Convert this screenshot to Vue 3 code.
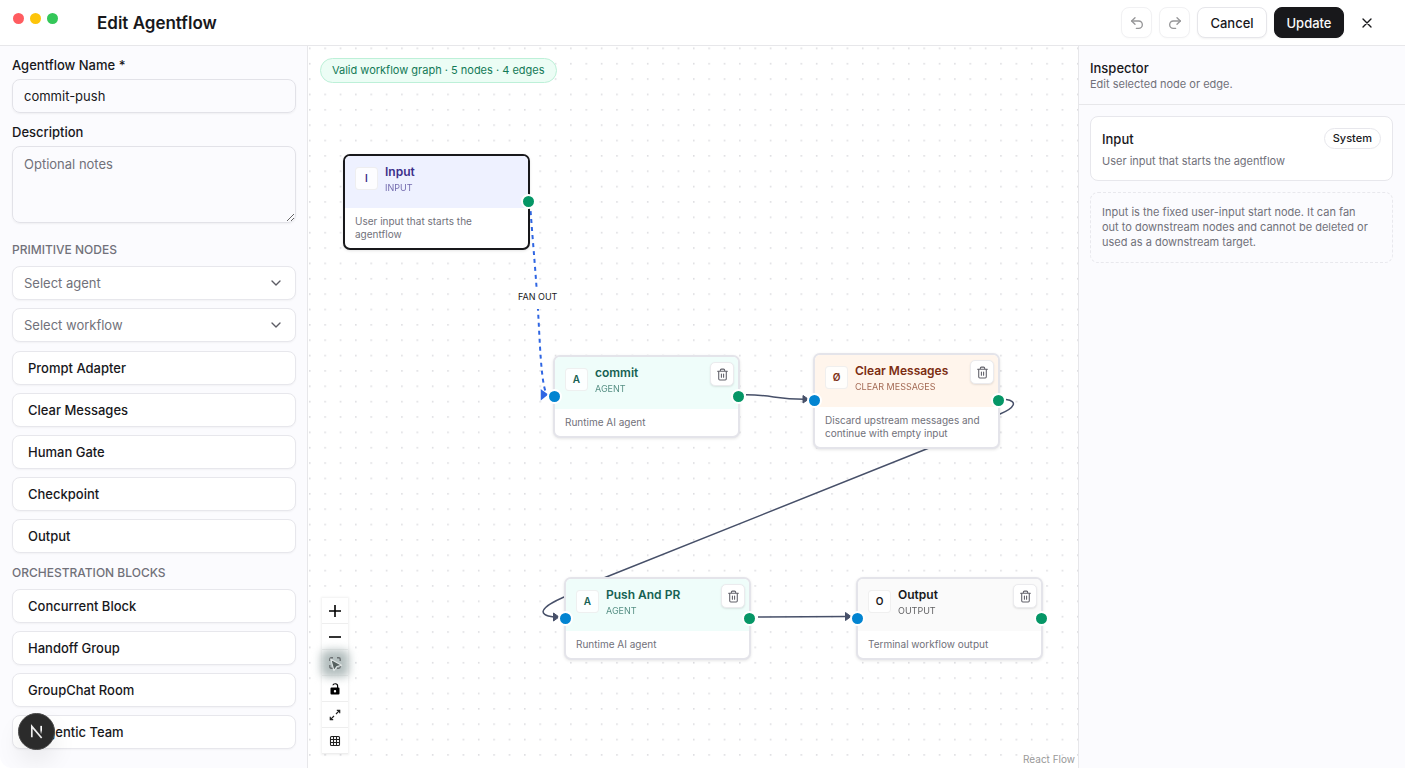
<script setup>
import { ref } from 'vue'

const name = ref('commit-push')
const notes = ref('')
const agent = ref('')
const workflow = ref('')

const primitives = ['Prompt Adapter', 'Clear Messages', 'Human Gate', 'Checkpoint', 'Output']
const blocks = ['Concurrent Block', 'Handoff Group', 'GroupChat Room', 'Magentic Team']

const nodes = [
  { id: 'input', x: 35, y: 108, tone: 'indigo', glyph: 'I', title: 'Input', kind: 'Input', text: 'User input that starts the agentflow', selected: true, out: true },
  { id: 'commit', x: 245, y: 309, tone: 'teal', glyph: 'A', title: 'commit', kind: 'Agent', text: 'Runtime AI agent', removable: true, in: true, out: true },
  { id: 'clear', x: 505, y: 307, tone: 'orange', glyph: 'Ø', title: 'Clear Messages', kind: 'Clear Messages', text: 'Discard upstream messages and continue with empty input', removable: true, in: true, out: true },
  { id: 'push', x: 256, y: 531, tone: 'teal', glyph: 'A', title: 'Push And PR', kind: 'Agent', text: 'Runtime AI agent', removable: true, in: true, out: true },
  { id: 'output', x: 548, y: 531, tone: 'plain', glyph: 'O', title: 'Output', kind: 'Output', text: 'Terminal workflow output', removable: true, in: true, out: true },
]
</script>

<template>
  <div class="app">
    <header class="topbar">
      <div class="lights"><i class="red"></i><i class="yellow"></i><i class="green"></i></div>
      <h1>Edit Agentflow</h1>
      <div class="actions">
        <button class="btn square faded" aria-label="Undo" disabled>
          <svg viewBox="0 0 24 24" class="line"><path d="M9 14 4 9l5-5" /><path d="M4 9h10.500a5.500 5.500 0 0 1 0 11H11" /></svg>
        </button>
        <button class="btn square faded" aria-label="Redo" disabled>
          <svg viewBox="0 0 24 24" class="line"><path d="m15 14 5-5-5-5" /><path d="M20 9H9.500a5.500 5.500 0 0 0 0 11H13" /></svg>
        </button>
        <button class="btn">Cancel</button>
        <button class="btn primary">Update</button>
        <button class="btn square bare" aria-label="Close">
          <svg viewBox="0 0 24 24" class="line"><path d="M18 6 6 18M6 6l12 12" /></svg>
        </button>
      </div>
    </header>

    <main class="work">
      <aside class="palette">
        <label for="flow-name">Agentflow Name *</label>
        <input id="flow-name" v-model="name" class="field" type="text" />
        <label for="flow-notes" class="spaced">Description</label>
        <textarea id="flow-notes" v-model="notes" class="field area" placeholder="Optional notes"></textarea>

        <h2 class="first">Primitive Nodes</h2>
        <div class="list">
          <div class="select">
            <select v-model="agent" aria-label="Agent"><option value="">Select agent</option></select>
            <svg viewBox="0 0 24 24" class="line"><path d="m6 9 6 6 6-6" /></svg>
          </div>
          <div class="select">
            <select v-model="workflow" aria-label="Workflow"><option value="">Select workflow</option></select>
            <svg viewBox="0 0 24 24" class="line"><path d="m6 9 6 6 6-6" /></svg>
          </div>
        </div>
        <div class="list after">
          <button v-for="p in primitives" :key="p" class="item">{{ p }}</button>
        </div>

        <h2>Orchestration Blocks</h2>
        <div class="list">
          <button v-for="b in blocks" :key="b" class="item">{{ b }}</button>
        </div>
      </aside>

      <section class="canvas">
        <svg class="layer">
          <defs>
            <pattern id="dots" width="20" height="20" patternUnits="userSpaceOnUse" patternTransform="translate(1 1.500) scale(.768)">
              <rect x="0" y="0.500" width="2" height="1.300" fill="#c6c6cc" />
            </pattern>
          </defs>
          <rect width="100%" height="100%" fill="url(#dots)" />
        </svg>
        <svg class="layer edges" viewBox="0 0 770 722">
          <g transform="translate(-308 -46)" fill="none" stroke="#475069" stroke-width="1.500">
            <path d="M530 203C533 245 536 275 538 310S541 380 546 393" stroke="#2f66e3" stroke-width="2" stroke-dasharray="4 4" />
            <path d="M541.500 390.500 547 394.500 541.500 399Z" fill="#2f66e3" stroke="#2f66e3" />
            <path d="M746 394.700C772 395 776 399 804 399.200" />
            <path d="M1006 399.500C1018 401 1015 408 1000 414C978 424 950 440 926.500 449L605 577.500C591 583 578 590 564 597C541 607 536 615 554 617" />
            <path d="M758 617 847 616.500" />
            <g fill="#475069" stroke-width="1" stroke-linejoin="round">
              <path d="M803 395.500 808.500 399.300 803 403Z" />
              <path d="M553.500 613 559 617 553.500 621Z" />
              <path d="M845.500 612.500 851 616.500 845.500 620.500Z" />
            </g>
          </g>
        </svg>
        <span class="edge-label">FAN OUT</span>

        <article
          v-for="n in nodes"
          :key="n.id"
          class="node"
          :class="[n.tone, { selected: n.selected }]"
          :style="{ left: n.x + 'px', top: n.y + 'px' }"
        >
          <header class="node-head">
            <div class="ident">
              <span class="glyph">{{ n.glyph }}</span>
              <div>
                <h3>{{ n.title }}</h3>
                <p class="kind">{{ n.kind }}</p>
              </div>
            </div>
            <button v-if="n.removable" class="trash" :aria-label="'Delete ' + n.title">
              <svg viewBox="0 0 24 24" class="line"><path d="M3 6h18M19 6v14a2 2 0 0 1-2 2H7a2 2 0 0 1-2-2V6M8 6V4a2 2 0 0 1 2-2h4a2 2 0 0 1 2 2v2M10 11v6M14 11v6" /></svg>
            </button>
          </header>
          <p class="node-body">{{ n.text }}</p>
          <i v-if="n.in" class="handle target"></i>
          <i v-if="n.out" class="handle source"></i>
        </article>

        <div class="status">Valid workflow graph · 5 nodes · 4 edges</div>

        <div class="controls">
          <button aria-label="Zoom in"><svg viewBox="0 0 12 12"><path d="M5.200 0h1.600v5.200H12v1.600H6.800V12H5.200V6.800H0V5.200h5.200z" /></svg></button>
          <button aria-label="Zoom out"><svg viewBox="0 0 12 12"><path d="M0 5.200h12v1.600H0z" /></svg></button>
          <button aria-label="Fit view" class="hovered">
            <svg viewBox="0 0 12 12" fill="none" stroke="#6b7072" stroke-width="1.400"><path d="M.8 4V2.200Q.8.8 2.200.8H4M8 .8h1.800q1.400 0 1.400 1.400V4M11.200 8v1.800q0 1.400-1.400 1.400H8M4 11.200H2.200Q.8 11.200.8 9.800V8" /></svg>
          </button>
          <button aria-label="Toggle interactivity"><svg viewBox="0 0 12 12"><path fill-rule="evenodd" d="M2.600 4.600H8V2.800Q8 1.300 6.300 1.300T4.500 2.300H3.300Q3.700.2 6.300.2 9.200.2 9.200 2.800v1.800h.3q1 0 1 1v5q0 1-1 1h-7q-1 0-1-1v-5q0-1 1.100-1zM6 7a1.200 1.200 0 1 0 0 2.400A1.200 1.200 0 0 0 6 7z" /></svg></button>
          <button aria-label="Full screen">
            <svg viewBox="0 0 12 12" fill="none" stroke="#222" stroke-width="1.200"><path d="M7.800 1.300h2.900v2.900M10.400 1.600 7 5M4.200 10.700H1.300V7.800M1.600 10.400 5 7" /></svg>
          </button>
          <button aria-label="Toggle grid"><svg viewBox="0 0 12 12" fill="none" stroke="#222" stroke-width="1.100"><rect x="1.500" y="1.500" width="9" height="9" rx="1" /><path d="M4.500 1.500v9M7.500 1.500v9M1.500 4.500h9M1.500 7.500h9" /></svg></button>
          <svg class="pointer" viewBox="0 0 12 12"><path d="M1.500 1 10.800 6.200 6.800 7.300 4.200 10.800Z" fill="#55605f" stroke="#dfe4e4" stroke-width="1" stroke-linejoin="round" /></svg>
        </div>
        <a class="credit" href="#">React Flow</a>
      </section>

      <aside class="inspector">
        <header>
          <h2>Inspector</h2>
          <p>Edit selected node or edge.</p>
        </header>
        <div class="details">
          <div class="card">
            <div class="card-head"><h3>Input</h3><span class="badge">System</span></div>
            <p>User input that starts the agentflow</p>
          </div>
          <p class="note">Input is the fixed user-input start node. It can fan out to downstream nodes and cannot be deleted or used as a downstream target.</p>
        </div>
      </aside>
    </main>

    <button class="devtools" aria-label="Open developer tools">
      <svg viewBox="0 0 16 16" fill="none" stroke-width="1.800">
        <defs><linearGradient id="fade" x1="0" y1="0" x2="0" y2="1"><stop offset="0.500" stop-color="#fff" /><stop offset="1" stop-color="#fff" stop-opacity="0" /></linearGradient></defs>
        <path d="M3 14V2.500L13.500 15" stroke="#eee" />
        <path d="M12.100 2h1.800v9h-1.800z" fill="url(#fade)" />
      </svg>
    </button>
  </div>
</template>

<style>
html, body, #app { height: 100%; }
body { margin: 0; background: #fff; }
</style>

<style scoped>
* { box-sizing: border-box; }
h1, h2, h3, p { margin: 0; }
button, input, select, textarea { font: inherit; color: inherit; }
.app {
  display: flex; flex-direction: column; height: 100%; position: relative;
  font-family: Inter, "Liberation Sans", sans-serif; font-size: 13px; color: #18181b; background: #fff;
}
.line { fill: none; stroke: currentColor; stroke-width: 2; stroke-linecap: round; stroke-linejoin: round; }

.topbar { display: flex; align-items: center; height: 46px; flex: none; padding-right: 23px; border-bottom: 1px solid #e7e7ea; }
.lights { display: flex; gap: 6px; width: 97px; height: 45px; padding: 13px 0 0 13px; }
.lights i { width: 11px; height: 11px; border-radius: 50%; }
.red { background: #ff5c60; }
.yellow { background: #fdc40a; }
.green { background: #34c759; }
h1 { font-size: 17px; line-height: 24px; font-weight: 600; }
.actions { display: flex; gap: 7px; margin-left: auto; }
.btn {
  height: 31px; width: 70px; padding: 0; border: 1px solid #e6e6ea; border-radius: 8px; background: #fff;
  display: flex; align-items: center; justify-content: center; font-size: 13px; font-weight: 500; box-shadow: 0 1px 2px rgba(0, 0, 0, .05);
}
.btn svg { width: 16px; height: 16px; }
.square { width: 31px; }
.faded { color: #969698; border-color: #f1f1f3; box-shadow: 0 1px 2px rgba(0, 0, 0, .02); }
.primary { background: #18181b; border-color: #18181b; color: #fafafa; }
.bare { border-color: transparent; background: none; box-shadow: none; }

.work { flex: 1; min-height: 0; display: grid; grid-template-columns: 308px minmax(0, 1fr) 327px; }

.palette { display: flex; flex-direction: column; padding: 12px 11px 0 12px; border-right: 1px solid #e7e7ea; background: #fbfbfe; border-bottom-left-radius: 12px; overflow: hidden; }
.palette label { font-size: 13px; line-height: 14px; font-weight: 500; margin-bottom: 7px; }
.palette .spaced { margin-top: 12px; }
.field { display: block; width: 100%; height: 34px; padding: 0 11px; border: 1px solid #e2e2e8; border-radius: 8px; background: transparent; box-shadow: 0 1px 2px rgba(0, 0, 0, .05); outline: none; }
.area { height: 77px; padding: 8px 11px; line-height: 19px; resize: vertical; }
.area::placeholder { color: #71717a; opacity: 1; }
.palette h2 { font-size: 12px; line-height: 16px; font-weight: 500; text-transform: uppercase; color: #71717a; margin: 12px 0 8px; }
.palette .first { margin-top: 19px; }
.list { display: flex; flex-direction: column; gap: 8px; }
.after { margin-top: 9px; }
.select { position: relative; }
.select select, .item { display: block; width: 100%; height: 34px; border: 1px solid #e7e7ec; border-radius: 8px; background: #fff; text-align: left; box-shadow: 0 1px 2px rgba(0, 0, 0, .04); }
.select select { appearance: none; padding: 0 11px; color: #71717a; }
.select svg { position: absolute; right: 12px; top: 9px; width: 16px; height: 16px; color: #5c5c64; pointer-events: none; }
.item { padding: 0 15px; font-weight: 500; }

.canvas { position: relative; overflow: hidden; }
.layer { position: absolute; left: 0; top: 0; width: 100%; height: 100%; }
.edges { width: 770px; height: 722px; }
.edge-label { position: absolute; left: 208px; top: 241px; padding: 5px 2px 7px; background: #fff; font-size: 9px; line-height: 10px; }

.node { position: absolute; width: 187px; border: 2px solid #e4e4ea; border-radius: 7px; background: #fff; box-shadow: 0 1px 3px rgba(0, 0, 0, .1); }
.selected { border-color: #18181b; }
.node-head { display: flex; align-items: flex-start; justify-content: space-between; height: 52px; padding: 5px 4px 0 10px; border-radius: 5px 5px 0 0; }
.ident { display: flex; align-items: center; gap: 7px; padding-top: 3px; }
.glyph { width: 23px; height: 23px; border: 1px solid rgba(0, 0, 0, .06); border-radius: 4px; background: rgba(255, 255, 255, .85); font-size: 10px; line-height: 21px; font-weight: 600; text-align: center; }
.node h3 { font-size: 12px; line-height: 15px; font-weight: 600; }
.kind { margin-top: 4px; font-size: 9px; line-height: 10px; text-transform: uppercase; opacity: .7; }
.indigo .node-head { background: #eef1ff; color: #3c2f8a; }
.teal .node-head { background: #effdfa; color: #156152; }
.orange .node-head { background: #fff5ec; color: #7c2d12; }
.plain .node-head { background: #fafafa; }
.trash { width: 24px; height: 24px; padding: 0; border: 1px solid #ebebee; border-radius: 5px; background: #fff; color: #62626b; display: flex; align-items: center; justify-content: center; box-shadow: 0 1px 2px rgba(0, 0, 0, .1); }
.trash svg { width: 13px; height: 13px; }
.node-body { padding: 7px 10px; font-size: 10px; line-height: 13px; color: #71717a; }
.handle { position: absolute; top: 50%; width: 15px; height: 15px; margin-top: -8px; border: 2px solid #fff; border-radius: 50%; }
.target { left: -8px; background: #0284d1; }
.source { right: -8px; background: #059666; }

.status { position: absolute; left: 12px; top: 12px; height: 25px; padding: 0 11px; border: 1px solid #bdf0d8; border-radius: 13px; background: #ecfdf5; color: #137a57; font-size: 11px; line-height: 23px; }
.controls { position: absolute; left: 14px; bottom: 14px; width: 26px; box-shadow: 0 0 2px 1px rgba(0, 0, 0, .06); }
.controls button { display: flex; align-items: center; justify-content: center; width: 26px; height: 26px; padding: 0; border: 0; border-bottom: 1px solid #eee; background: #fff; }
.controls button svg { width: 12px; height: 12px; position: relative; }
.hovered::before { content: ""; position: absolute; left: -1px; top: 52px; width: 28px; height: 27px; border-radius: 6px; background: #b4bfbf; filter: blur(4px); }
.pointer { position: absolute; left: 7px; top: 60px; width: 14px; height: 14px; }
.credit { position: absolute; right: 3px; bottom: 2px; font-size: 10px; line-height: 14px; color: #999; text-decoration: none; }

.inspector { border-left: 1px solid #e7e7ea; background: #fbfbfe; }
.inspector > header { height: 59px; padding: 13px 11px 0; border-bottom: 1px solid #e7e7ea; }
.inspector h2 { font-size: 13px; line-height: 18px; font-weight: 500; }
.inspector p { font-size: 11px; line-height: 15px; color: #71717a; }
.details { display: flex; flex-direction: column; gap: 11px; padding: 11px 12px 0 11px; }
.card { border: 1px solid #e7e7ec; border-radius: 8px; padding: 11px; background: #fff; }
.card-head { display: flex; align-items: center; justify-content: space-between; margin-bottom: 5px; }
.card h3 { font-size: 13px; font-weight: 500; }
.badge { height: 21px; padding: 0 8px; border: 1px solid #e7e7ec; border-radius: 11px; font-size: 11px; line-height: 19px; font-weight: 500; }
.inspector .note { border: 1px dashed #e8e8ed; border-radius: 8px; padding: 12px 20px 12px 11px; }

.devtools { position: absolute; left: 18px; bottom: 18px; width: 37px; height: 37px; padding: 0; display: flex; align-items: center; justify-content: center; border: 1px solid #4a4a4a; border-radius: 50%; background: #2b2b2b; box-shadow: 0 12px 24px rgba(0, 0, 0, .08); }
.devtools svg { width: 15px; height: 15px; }
</style>
